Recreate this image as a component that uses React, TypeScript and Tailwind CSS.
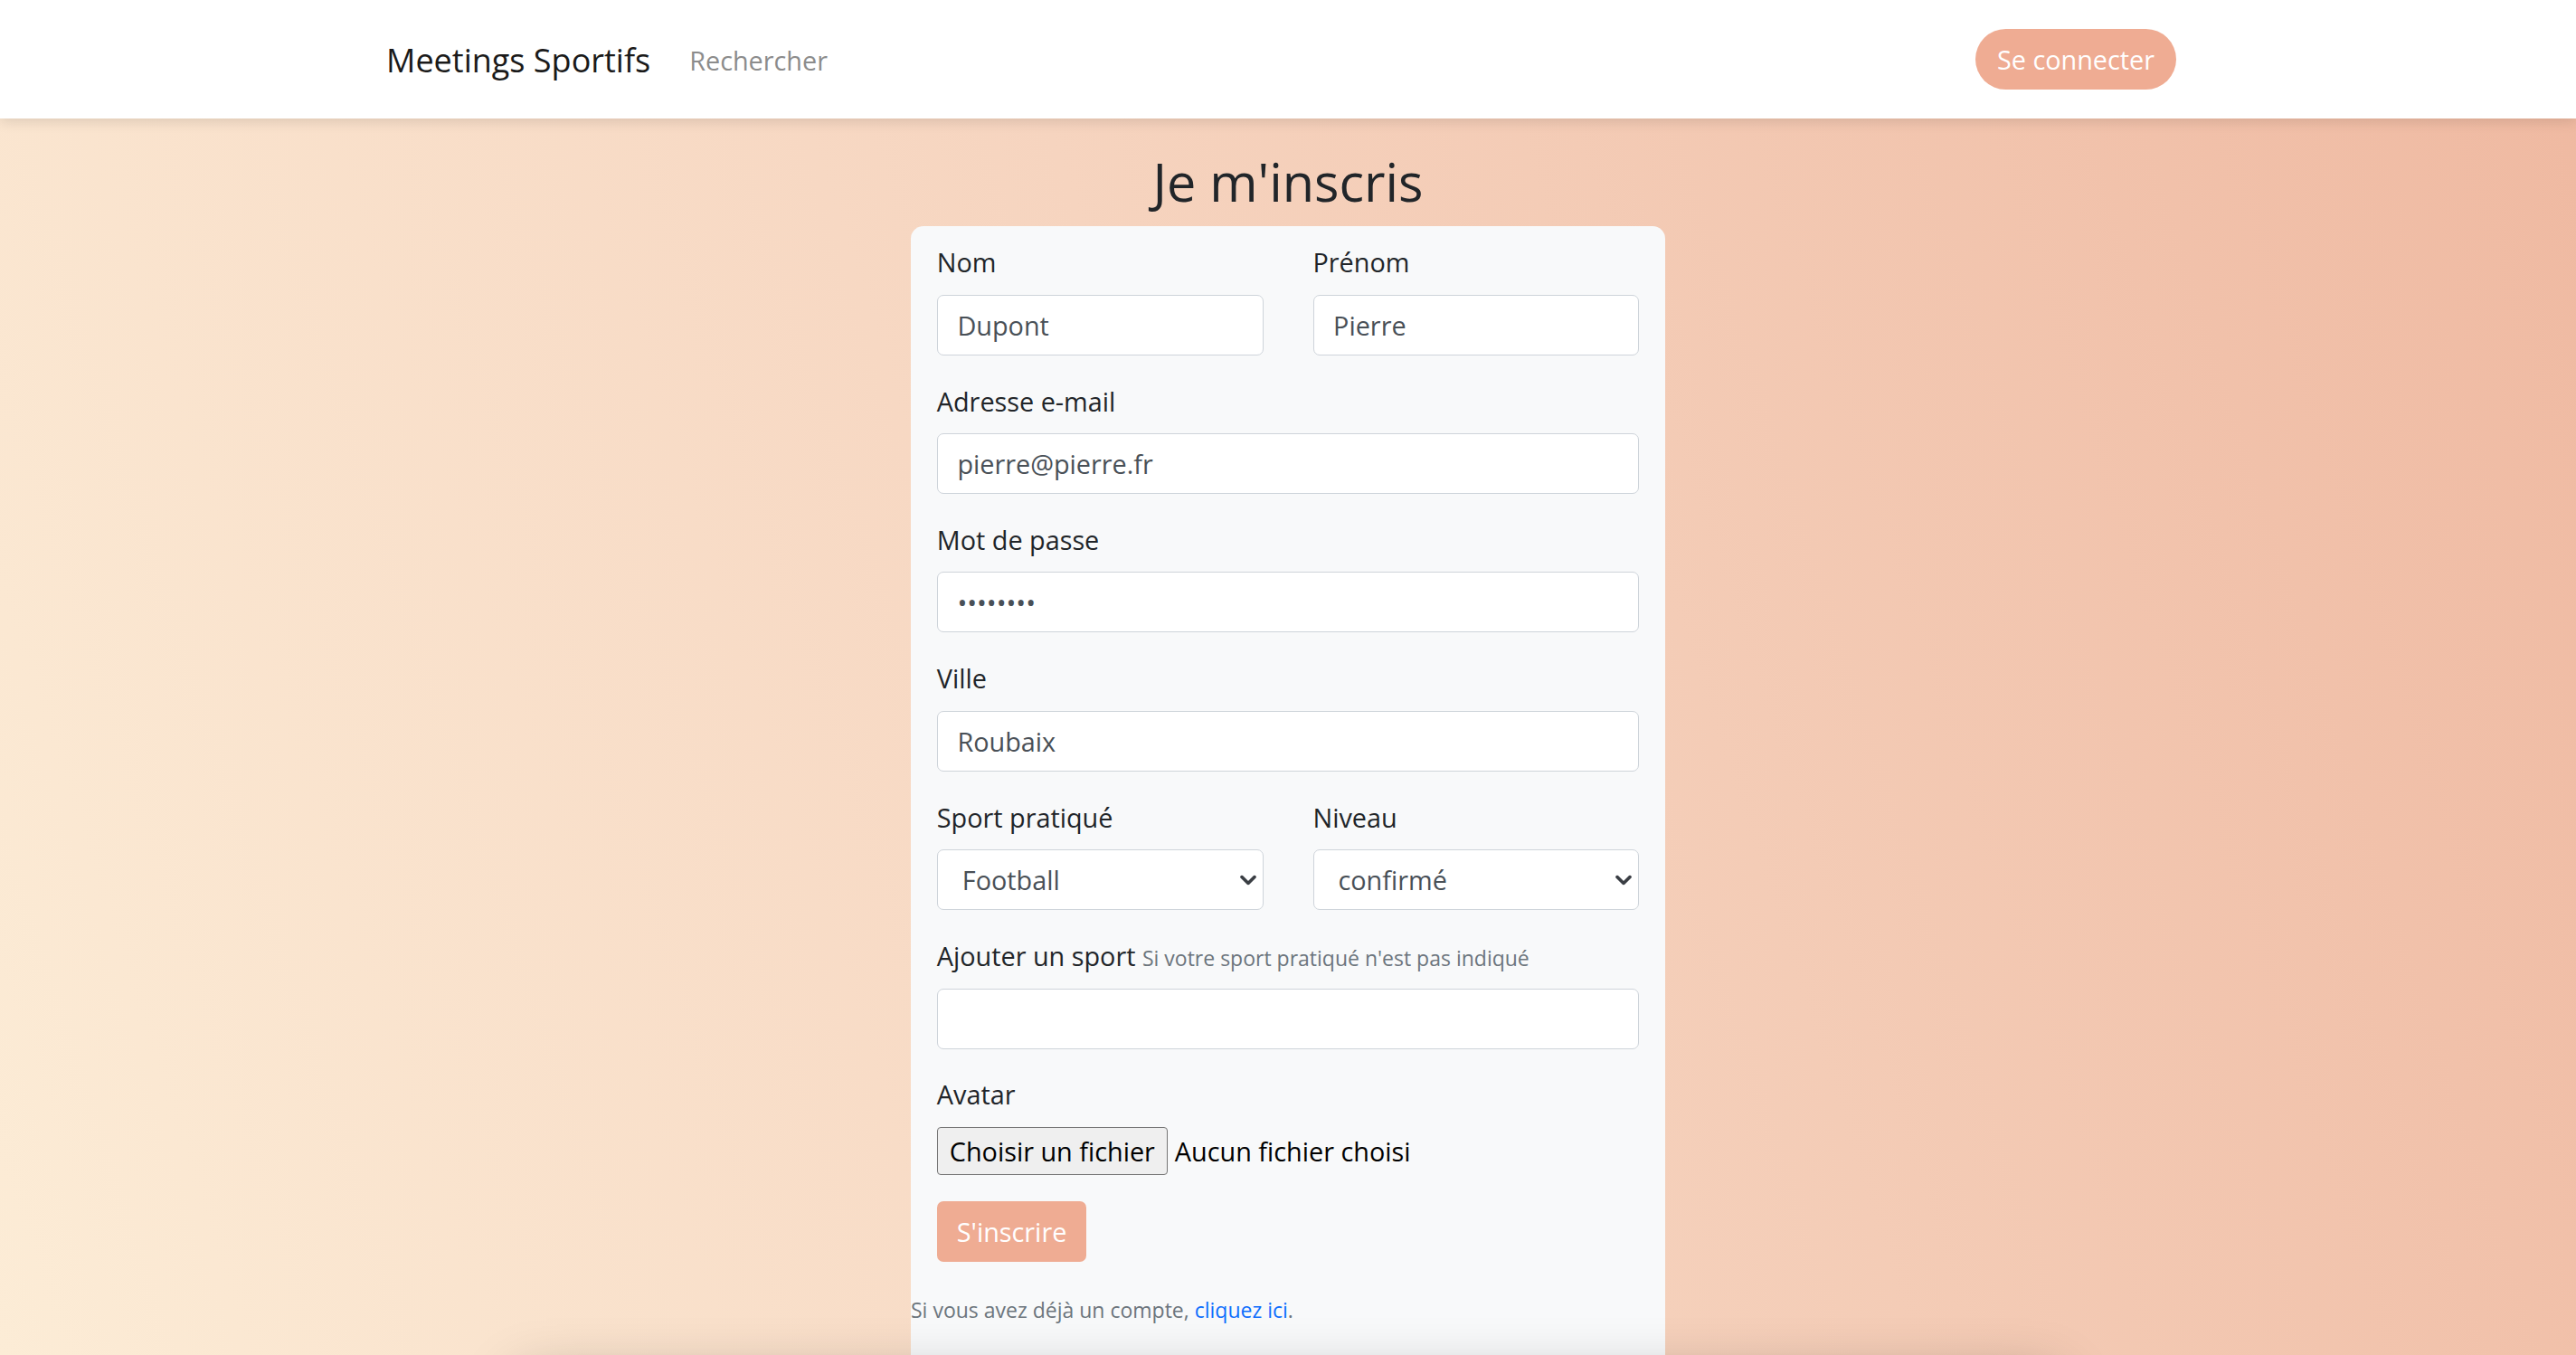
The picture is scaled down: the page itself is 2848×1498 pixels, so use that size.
import React from 'react'

const labelCls = 'block mb-[14.4px] text-[28.8px] leading-[43.2px] text-[#212529]'
const inputCls =
  'block w-full h-[67px] px-[21.6px] bg-white border-[1.8px] border-[#ced4da] rounded-[7px] text-[28.8px] text-[#495057] outline-none'

const Field = ({ label, children }: { label: React.ReactNode; children: React.ReactNode }) => (
  <div className="mb-[28.8px]">
    <label className={labelCls}>{label}</label>
    {children}
  </div>
)

const Chevron = () => (
  <svg
    width="18"
    height="11"
    viewBox="0 0 18 11"
    className="absolute right-[8px] top-1/2 -translate-y-1/2 pointer-events-none"
  >
    <polyline points="2,2 9,9 16,2" fill="none" stroke="#3a3e44" strokeWidth="3.6" strokeLinecap="round" strokeLinejoin="round" />
  </svg>
)

const Select = ({ value, options }: { value: string; options: string[] }) => (
  <div className="relative">
    <select
      defaultValue={value}
      className="block w-full h-[67px] pl-[27px] pr-[40px] bg-white border-[1.8px] border-[#ced4da] rounded-[7px] text-[28.8px] text-[#495057] appearance-none outline-none"
    >
      {options.map((o) => (
        <option key={o}>{o}</option>
      ))}
    </select>
    <Chevron />
  </div>
)

const Navbar = () => (
  <nav className="relative z-10 bg-white h-[131px] flex items-center pl-[427px] pr-[442px] shadow-[0_3px_14px_rgba(0,0,0,0.12)]">
    <span className="mt-[2px] text-[36px] text-[#1a1a1a]">Meetings Sportifs</span>
    <span className="mt-[2px] ml-[43px] text-[28.8px] text-[#8c8c8c]">Rechercher</span>
    <button className="ml-auto h-[67px] px-[24px] rounded-full bg-[#efac93] text-white text-[28.8px]">
      Se connecter
    </button>
  </nav>
)

export default function App() {
  return (
    <div
      className="h-screen overflow-hidden bg-[linear-gradient(72deg,#fcecd6_0%,#f6d4bf_48%,#efb9a1_100%)]"
      style={{ fontFamily: '"Open Sans", "Noto Sans", sans-serif' }}
    >
      <Navbar />

      <h2 className="mt-[35px] mb-[15px] text-center text-[57.6px] leading-[1.2] font-medium text-[#212529]">
        Je m'inscris
      </h2>

      <div className="mx-auto w-[834px] bg-[#f8f9fa] rounded-t-[14px] pb-[60px]">
        <form className="px-[28.8px] pt-[18px] pb-[36px]">
          <div className="grid grid-cols-2 gap-x-[55px]">
            <Field label="Nom">
              <input className={inputCls} defaultValue="Dupont" readOnly />
            </Field>
            <Field label="Prénom">
              <input className={inputCls} defaultValue="Pierre" readOnly />
            </Field>
          </div>

          <Field label="Adresse e-mail">
            <input className={inputCls} defaultValue="pierre@pierre.fr" readOnly />
          </Field>

          <Field label="Mot de passe">
            <input type="password" className={inputCls} defaultValue="password" readOnly />
          </Field>

          <Field label="Ville">
            <input className={inputCls} defaultValue="Roubaix" readOnly />
          </Field>

          <div className="grid grid-cols-2 gap-x-[55px]">
            <Field label="Sport pratiqué">
              <Select value="Football" options={['Football', 'Basketball', 'Tennis', 'Rugby']} />
            </Field>
            <Field label="Niveau">
              <Select value="confirmé" options={['débutant', 'intermédiaire', 'confirmé']} />
            </Field>
          </div>

          <Field
            label={
              <>
                Ajouter un sport{' '}
                <span className="text-[23px] leading-none text-[#6c757d]">
                  Si votre sport pratiqué n'est pas indiqué
                </span>
              </>
            }
          >
            <input className={inputCls} readOnly />
          </Field>

          <Field label="Avatar">
            <div className="flex items-center">
              <span className="h-[53px] px-[13px] flex items-center bg-[#efefef] border-[1.8px] border-[#767676] rounded-[4px] text-[28.8px] text-black">
                Choisir un fichier
              </span>
              <span className="ml-[8px] text-[28.8px] text-black">Aucun fichier choisi</span>
            </div>
          </Field>

          <button
            type="button"
            className="h-[67px] px-[22px] rounded-[7px] bg-[#efac93] text-white text-[28.8px]"
          >
            S'inscrire
          </button>
        </form>

        <p className="text-[23px] leading-[34.5px] text-[#6c757d]">
          Si vous avez déjà un compte, <a className="text-[#0d6efd]">cliquez ici</a>.
        </p>
      </div>

      <footer className="mx-auto w-[1700px] h-[200px] bg-[#f8f9fa] shadow-[0_0_60px_rgba(0,0,0,0.3)]" />
    </div>
  )
}
